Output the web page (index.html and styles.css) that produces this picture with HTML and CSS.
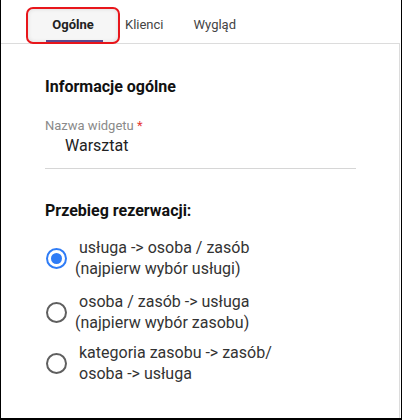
FILE: index.html
```html
<!DOCTYPE html>
<html lang="pl">
<head>
<meta charset="utf-8">
<link rel="stylesheet" href="styles.css">
</head>
<body>
<div class="frame">
  <div class="tabs">
    <div class="tab active"><span class="tab-label">Ogólne</span><span class="ink"></span></div>
    <div class="tab">Klienci</div>
    <div class="tab">Wygląd</div>
  </div>
  <div class="panel">
    <h2 class="section-title">Informacje ogólne</h2>
    <div class="field">
      <label class="field-label">Nazwa widgetu <span class="req">*</span></label>
      <div class="field-value">Warsztat</div>
    </div>
    <h2 class="section-title flow">Przebieg rezerwacji:</h2>
    <div class="radios">
      <div class="radio checked">
        <span class="circle"><span class="dot"></span></span>
        <div class="radio-text"><div class="l1">usługa -&gt; osoba / zasób</div><div class="l2">(najpierw wybór usługi)</div></div>
      </div>
      <div class="radio second">
        <span class="circle"></span>
        <div class="radio-text"><div class="l1">osoba / zasób -&gt; usługa</div><div class="l2">(najpierw wybór zasobu)</div></div>
      </div>
      <div class="radio">
        <span class="circle"></span>
        <div class="radio-text"><div class="l1">kategoria zasobu -&gt; zasób/</div><div class="l1">osoba -&gt; usługa</div></div>
      </div>
    </div>
  </div>
</div>
</body>
</html>
```
FILE: styles.css
```css
* { box-sizing: border-box; }
html, body { margin: 0; padding: 0; background: #fff; }
body { font-family: Roboto, "Noto Sans", sans-serif; color: #212121; }
.frame {
  width: 402px; height: 420px;
  border-left: 1px solid #000; border-right: 1px solid #000; border-bottom: 2px solid #000;
  display: flex; flex-direction: column;
}
.tabs {
  height: 44px; flex: none;
  border-bottom: 1px solid #dcdcdc;
  display: flex; align-items: stretch;
  padding-left: 25px;
  margin-right: 1px;
}
.tab {
  position: relative;
  display: flex; align-items: center; justify-content: center;
  font-size: 13px; color: #444;
  padding: 6px 15px 0 5px;
}
.tab + .tab + .tab { padding-left: 15px; }
.tab.active {
  width: 94px; height: 37px; margin-top: 7px; padding: 0 0 2px;
  border: 2px solid #e8161b; border-radius: 7px;
  background: #f6f6f6;
  box-shadow: inset 0 0 4px rgba(0,0,0,0.12);
  font-weight: 700; color: #222;
  margin-right: 0;
}
.ink {
  position: absolute; left: 18px; right: 15px; bottom: 0; height: 2px;
  background: #5b4a8e;
}
.panel {
  flex: 1;
  border-right: 1px solid #dcdcdc;
  margin-right: 1px;
  padding: 32px 0 0 44px;
}
.section-title {
  margin: 0; font-size: 16px; font-weight: 700; color: #111; line-height: 22px;
}
.field { margin-top: 19px; width: 311px; border-bottom: 1px solid #d6d6d6; padding-bottom: 12px; }
.field-label { display: block; font-size: 13px; color: #8a8a8a; line-height: 17px; }
.req { color: #e53935; }
.field-value { font-size: 16px; color: #222; padding-left: 20px; line-height: 20px; margin-top: 2px; }
.flow { margin-top: 31px; }
.radios { margin-top: 16px; display: flex; flex-direction: column; gap: 10px; }
.radio { display: flex; align-items: center; }
.radio.second { margin-top: 3px; }
.circle {
  width: 21px; height: 21px; border-radius: 50%;
  border: 2px solid #5f5f5f; flex: none;
  display: flex; align-items: center; justify-content: center;
  margin-left: 1px; margin-right: 8px;
}
.radio.checked .circle { border-color: #2f7cf6; }
.dot { width: 11px; height: 11px; border-radius: 50%; background: #2f7cf6; }
.radio-text { font-size: 16px; color: #333; line-height: 20.5px; }
.radio-text .l1 { padding-left: 4px; }
.radio-text .l2 { padding-left: 0; }
```
